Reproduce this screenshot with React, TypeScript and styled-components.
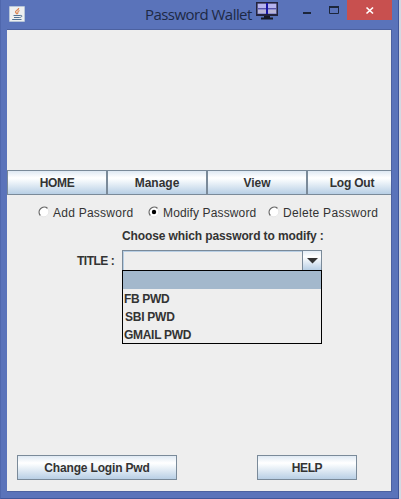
import React from "react";
import styled, { createGlobalStyle } from "styled-components";

const GlobalStyle = createGlobalStyle`
  * { box-sizing: border-box; }
  body { margin: 0; overflow: hidden; background: #d5d8e2; }
`;

const Window = styled.div`
  width: 399px;
  height: 499px;
  padding: 0 6px 6px 6px;
  display: flex;
  flex-direction: column;
  background: #5a73ba;
  border-right: 1px solid #40569a;
  border-bottom: 1px solid #40569a;
  border-left: 1px solid #4f67ad;
  font: 12px/18px "Liberation Sans", Arial, sans-serif;
  color: #333;
`;

const TitleBar = styled.header`
  height: 29px;
  flex: none;
  display: flex;
  align-items: flex-start;
`;

const AppIcon = styled.svg`
  margin: 6px 0 0 2px;
  flex: none;
`;

const TitleText = styled.h1`
  margin: 3px 0 0 120px;
  width: 111px;
  flex: none;
  font: 400 15px/22px "Open Sans", "Noto Sans", sans-serif;
  letter-spacing: -0.55px;
  white-space: nowrap;
  color: #1d2945;
`;

const MonitorIcon = styled.svg`
  margin-top: 1px;
  flex: none;
`;

const WindowControls = styled.div`
  display: flex;
  margin-left: 11px;
`;

const ControlButton = styled.button<{ $width: number; $close?: boolean }>`
  width: ${(p) => p.$width}px;
  height: 20px;
  padding: 0;
  border: 0;
  background: ${(p) => (p.$close ? "#c8504f" : "transparent")};
  svg { display: block; }
`;

const Client = styled.main`
  flex: 1;
  border: solid #4c61a0;
  border-width: 1px 1px 1px 0;
  background: #eee;
  display: flex;
  flex-direction: column;
  overflow: hidden;
`;

const Banner = styled.div`
  height: 140px;
  flex: none;
`;

const Spaced = styled.span<{ $spacing?: number }>`
  letter-spacing: ${(p) => p.$spacing ?? 0}px;
  white-space: pre;
`;

const MetalButton = styled.button<{ $width: number }>`
  width: ${(p) => p.$width}px;
  height: 25px;
  flex: none;
  padding: 0;
  border: 1px solid #7a8a99;
  background: linear-gradient(#dfe9f3 0%, #fff 30%, #f8fbfd 38%, #b8cfe5 100%);
  color: #333;
  font: bold 12px/22px "Liberation Sans", Arial, sans-serif;
`;

const Nav = styled.nav`
  display: flex;
  width: 390px;
  flex: none;
`;

const RadioRow = styled.div`
  display: flex;
  height: 18px;
  margin: 9px 0 0 31px;
`;

const Option = styled.label<{ $width: number }>`
  display: flex;
  width: ${(p) => p.$width}px;
  gap: 3px;
  flex: none;
  svg { margin-top: 2px; flex: none; }
`;

const Prompt = styled.p`
  margin: 5px 0 0 115px;
  height: 18px;
  font-weight: bold;
`;

const Field = styled.div`
  display: flex;
  margin-top: 5px;
  font-weight: bold;
`;

const FieldLabel = styled.div`
  width: 115px;
  padding: 2px 0 0 70px;
`;

const Combo = styled.div`
  width: 200px;
`;

const ComboBox = styled.div`
  display: flex;
  justify-content: flex-end;
  height: 20px;
  border: 1px solid #7a8a99;
  border-bottom: 0;
  box-shadow: inset 1px 1px #b8cfe5;
`;

const ComboArrow = styled.div`
  width: 19px;
  border-left: 1px solid #7a8a99;
  background: linear-gradient(#e4edf6, #fff 30%, #b8cfe5);
  svg { display: block; }
`;

const List = styled.ul`
  margin: 0;
  padding: 0;
  list-style: none;
  border: 1px solid #000;
`;

const Item = styled.li<{ $selected?: boolean; $indent?: number }>`
  height: 18px;
  line-height: 20px;
  padding-left: ${(p) => p.$indent ?? 0}px;
  background: ${(p) => (p.$selected ? "#a3b8cc" : "transparent")};
`;

const Footer = styled.footer`
  display: flex;
  gap: 80px;
  margin: auto 0 11px 10px;
`;

function Radio({ checked }: { checked?: boolean }) {
  return (
    <svg width="12" height="12" viewBox="0 0 12 12">
      <circle cx="6" cy="6" r="5.2" fill="#fff" />
      <path d="M2.4 9.6A5.1 5.1 0 0 1 9.6 2.4" fill="none" stroke="#666" strokeWidth="1.3" />
      <path d="M9.6 2.4A5.1 5.1 0 0 1 2.4 9.6" fill="none" stroke="#dcdcdc" strokeWidth="0.8" />
      {checked && <circle cx="6" cy="6" r="2.2" fill="#000" />}
    </svg>
  );
}

const navItems = [
  { text: "HOME", width: 100, spacing: -0.35 },
  { text: "Manage", width: 100, spacing: 0 },
  { text: "View", width: 100, spacing: 0 },
  { text: "Log Out", width: 90, spacing: -0.2 },
];

const options = [
  { text: "Add Password", width: 110, spacing: 0.25 },
  { text: "Modify Password", width: 120, spacing: 0.13 },
  { text: "Delete Password", width: 115, spacing: 0.3 },
];

const entries = [
  { text: "FB PWD", spacing: -0.35, indent: 1 },
  { text: "SBI PWD", spacing: -0.25, indent: 2 },
  { text: "GMAIL PWD", spacing: -0.3, indent: 1 },
];

export default function App() {
  return (
    <>
      <GlobalStyle />
      <Window>
        <TitleBar>
          <AppIcon width="16" height="16" viewBox="0 0 16 16">
            <rect width="16" height="16" rx="1" fill="#b7c5d8" />
            <rect x="1" y="1" width="14" height="14" fill="#eef0f0" />
            <path d="M9.7 2C10 4 5.8 4.5 6.5 6.2L8 8M10.5 4.5C7.5 5.6 9.8 6.5 8.3 8" fill="none" stroke="#dc8652" strokeWidth="1.2" />
            <path d="M4.5 9.5H11M5 11.5H10.5M3.2 13.5H12.5M11 9.5C14 8.9 13 11.5 10.5 11.5" fill="none" stroke="#527293" />
          </AppIcon>
          <TitleText>Password Wallet</TitleText>
          <MonitorIcon width="23" height="19" viewBox="0 0 23 19">
            <path d="M0 1H22V15H0Z" fill="#24243e" />
            <path d="M1.5 2.5H20.5V13H1.5Z" fill="#8f8fce" />
            <path d="M2 3H20V7H2Z" fill="#b5b3ee" />
            <path d="M2 9H20V12H2Z" fill="#b9b5d6" />
            <path d="M2 7.5H20" stroke="#5652aa" />
            <path d="M11 2V13" stroke="#1a16a4" strokeWidth="2" />
            <path d="M8 15H14V16.5H17V18.5H5V16.5H8Z" fill="#171a26" />
          </MonitorIcon>
          <WindowControls>
            <ControlButton $width={30} aria-label="Minimize">
              <svg width="30" height="20"><path d="M13 12H21V14H13Z" fill="#1c263b" /></svg>
            </ControlButton>
            <ControlButton $width={27} aria-label="Maximize">
              <svg width="27" height="20"><path d="M9.5 7V13.5H18.5V7" fill="none" stroke="#1c263b" /><path d="M9 6H19V8H9Z" fill="#1c263b" /></svg>
            </ControlButton>
            <ControlButton $width={45} $close aria-label="Close">
              <svg width="45" height="20"><path d="M19.5 7.5L26 13.5M26 7.5L19.5 13.5" stroke="#fff" strokeWidth="1.7" /></svg>
            </ControlButton>
          </WindowControls>
        </TitleBar>
        <Client>
          <Banner />
          <Nav>
            {navItems.map((n) => (
              <MetalButton key={n.text} $width={n.width}>
                <Spaced $spacing={n.spacing}>{n.text}</Spaced>
              </MetalButton>
            ))}
          </Nav>
          <RadioRow>
            {options.map((o) => (
              <Option key={o.text} $width={o.width}>
                <Radio checked={o.text === "Modify Password"} />
                <Spaced $spacing={o.spacing}>{o.text}</Spaced>
              </Option>
            ))}
          </RadioRow>
          <Prompt><Spaced $spacing={-0.11}>Choose which password to modify :</Spaced></Prompt>
          <Field>
            <FieldLabel><Spaced $spacing={-0.5}>TITLE :</Spaced></FieldLabel>
            <Combo>
              <ComboBox>
                <ComboArrow>
                  <svg width="18" height="19"><path d="M4 7H15L9.5 12.5Z" fill="#333" /></svg>
                </ComboArrow>
              </ComboBox>
              <List>
                <Item $selected />
                {entries.map((e) => (
                  <Item key={e.text} $indent={e.indent}><Spaced $spacing={e.spacing}>{e.text}</Spaced></Item>
                ))}
              </List>
            </Combo>
          </Field>
          <Footer>
            <MetalButton $width={160}><Spaced $spacing={-0.17}>Change Login Pwd</Spaced></MetalButton>
            <MetalButton $width={100}><Spaced $spacing={-0.4}>HELP</Spaced></MetalButton>
          </Footer>
        </Client>
      </Window>
    </>
  );
}
